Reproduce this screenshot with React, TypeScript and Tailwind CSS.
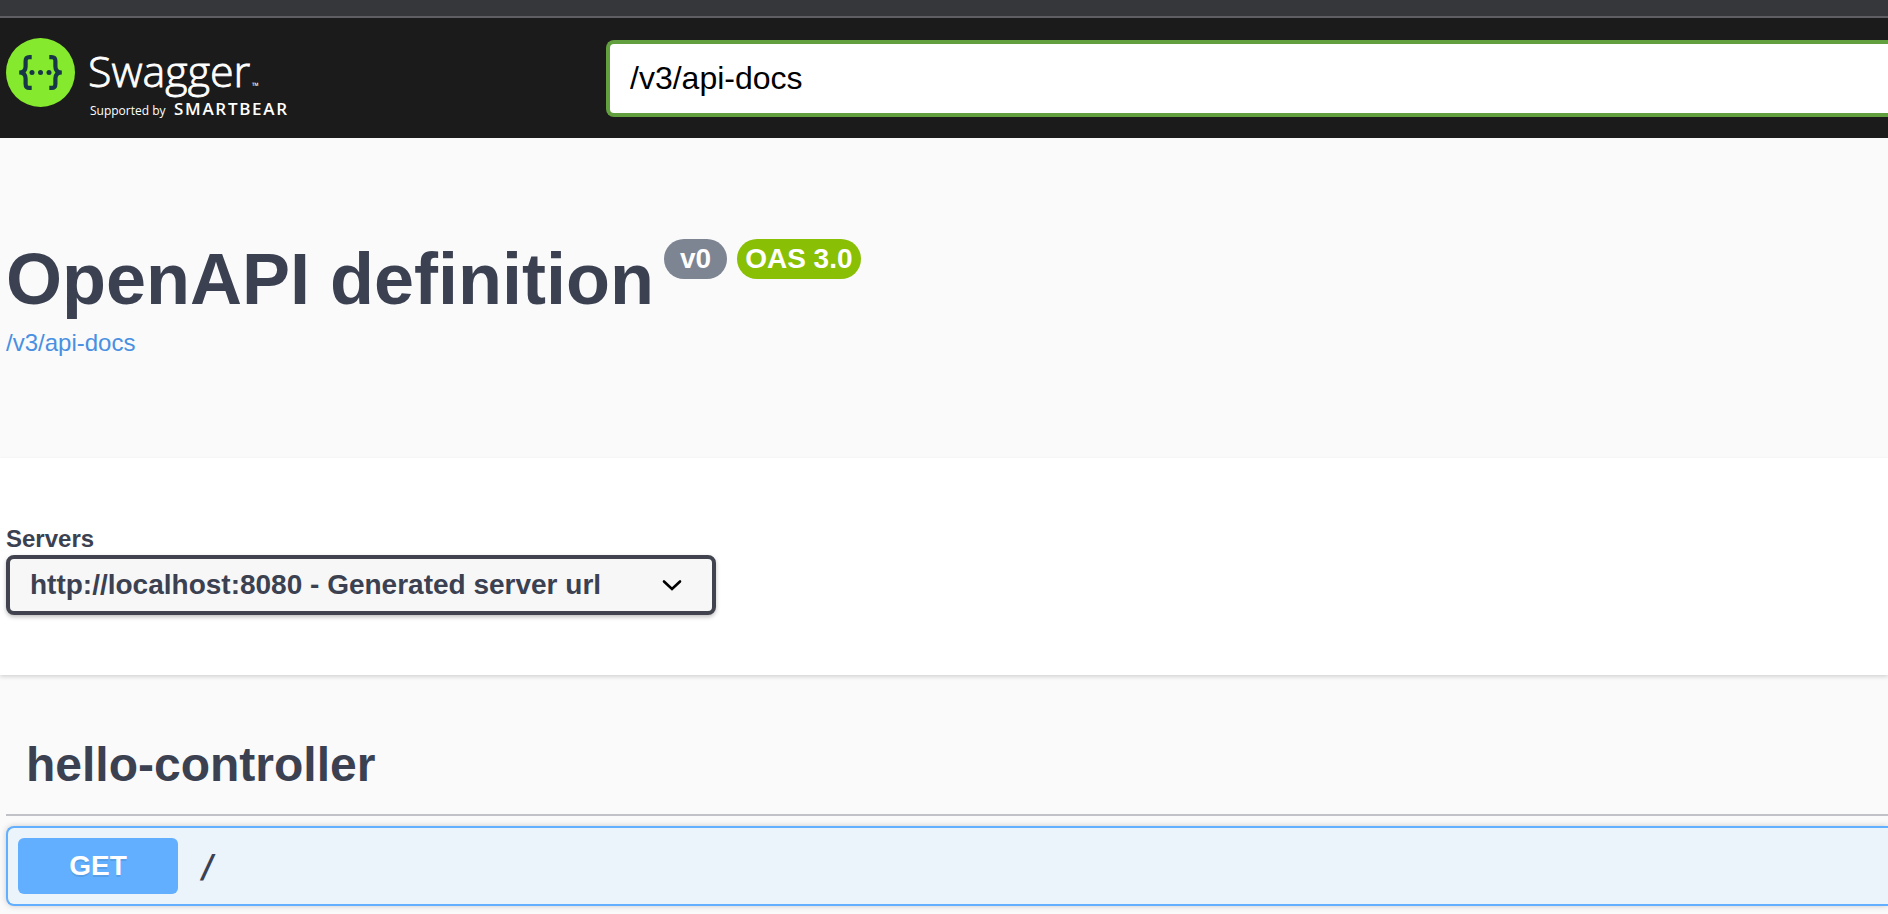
import React, { useState } from 'react';

const servers = [
  { url: 'http://localhost:8080', description: 'Generated server url' },
];

const operations = [{ method: 'GET', path: '/' }];

function Logo() {
  return (
    <svg width="300" height="84" viewBox="0 0 300 84" role="img" aria-label="Swagger">
      <circle cx="34.5" cy="34.5" r="34.5" fill="#85ea2d" />
      <g fill="none" stroke="#173647" strokeWidth="4.2">
        <path d="M25.7 19.1h-2.2c-3 0-3.9 1.3-3.9 4.2v5.2c0 3.6-1.6 6-6.4 6 4.8 0 6.4 2.4 6.4 6v5.2c0 2.9.9 4.2 3.9 4.2h2.2" />
        <path d="M43.3 19.1h2.2c3 0 3.9 1.3 3.9 4.2v5.2c0 3.6 1.6 6 6.4 6-4.8 0-6.4 2.4-6.4 6v5.2c0 2.9-.9 4.2-3.9 4.2h-2.2" />
      </g>
      <g fill="#173647">
        <circle cx="26" cy="34.5" r="2.5" />
        <circle cx="34.5" cy="34.5" r="2.5" />
        <circle cx="43" cy="34.5" r="2.5" />
      </g>
      <text x="82" y="49" fill="#fff" stroke="#fff" strokeWidth="0.8" fontSize="43" className="font-['Open_Sans',sans-serif] font-light">Swagger</text>
      <text x="246" y="51" fill="#fff" fontSize="9" className="font-['Open_Sans',sans-serif]">™</text>
      <text x="84" y="77" fill="#fff" fontSize="12" className="font-['Open_Sans',sans-serif]">Supported by</text>
      <text x="168" y="77" fill="#fff" fontSize="17" className="font-['Open_Sans',sans-serif] font-semibold tracking-widest">SMARTBEAR</text>
    </svg>
  );
}

export default function App() {
  const [specUrl, setSpecUrl] = useState('/v3/api-docs');

  return (
    <div className="min-h-screen overflow-x-hidden bg-[#fafafa] font-['Liberation_Sans',Arial,sans-serif] text-[#3b4151]">
      {/* Browser toolbar edge */}
      <div className="h-[18px] border-b-2 border-[#5f5e63] bg-[#36373b]" />

      {/* Top bar */}
      <header className="flex h-[120px] items-start bg-[#1b1b1b]">
        <a href="#" className="w-[606px] shrink-0 pt-5 pl-1.5">
          <Logo />
        </a>
        <form className="flex min-w-0 flex-1 pt-[22px]" onSubmit={(e) => e.preventDefault()}>
          <input
            type="text"
            aria-label="Definition URL"
            value={specUrl}
            onChange={(e) => setSpecUrl(e.target.value)}
            className="h-[77px] w-full min-w-0 rounded-l-lg border-4 border-r-0 border-[#62a03f] bg-white px-5 text-[32px] text-black outline-none"
          />
        </form>
      </header>

      <main>
        {/* Info */}
        <section className="px-1.5 pt-[101px] pb-[103px]">
          <div className="flex items-start">
            <h2 className="text-[72px] leading-[80px] font-bold">OpenAPI definition</h2>
            <span className="ml-2.5 flex h-10 items-center rounded-full bg-[#7d8492] px-4 text-[28px] font-bold text-white">v0</span>
            <span className="ml-2.5 flex h-10 items-center rounded-full bg-[#89bf04] px-2 text-[28px] font-bold text-white">OAS 3.0</span>
          </div>
          <a href="#" className="mt-3 block w-fit text-2xl leading-6 text-[#4990e2]">/v3/api-docs</a>
        </section>

        {/* Servers */}
        <section className="bg-white px-1.5 pt-[69px] pb-[60px] shadow-[0_2px_4px_rgba(0,0,0,0.15)]">
          <label htmlFor="servers" className="mb-1 block text-2xl leading-6 font-bold">Servers</label>
          <div className="relative w-[710px] max-w-full">
            <select
              id="servers"
              className="block h-[60px] w-full appearance-none rounded-lg border-4 border-[#41444e] bg-[#f7f7f7] pr-20 pl-5 text-[28px] font-bold shadow-[0_2px_4px_rgba(0,0,0,0.25)]"
            >
              {servers.map((server) => (
                <option key={server.url} value={server.url}>
                  {server.url} - {server.description}
                </option>
              ))}
            </select>
            <svg className="pointer-events-none absolute top-6 right-8" width="24" height="14" viewBox="0 0 24 14" fill="none">
              <path d="M4 2.5l8 7.500L20 2.5" stroke="#000" strokeWidth="2.6" strokeLinecap="round" />
            </svg>
          </div>
        </section>

        {/* Operations */}
        <section className="pt-[66px] pl-1.5">
          <h3 className="border-b-2 border-[#c1c2c8] pb-[25px] pl-5 text-[48px] leading-[48px] font-bold">hello-controller</h3>
          {operations.map((op) => (
            <div
              key={op.method + op.path}
              className="mt-2.5 flex items-center rounded-l-lg border-2 border-r-0 border-[#61affe] bg-[#ebf3fb] p-2.5 shadow-[0_0_6px_rgba(0,0,0,0.19)]"
            >
              <button type="button" className="flex flex-1 items-center text-left">
                <span className="flex h-14 w-40 items-center justify-center rounded-md bg-[#61affe] text-[28px] font-bold text-white [text-shadow:0_2px_0_rgba(0,0,0,0.1)]">
                  {op.method}
                </span>
                <span className="px-5 font-['DejaVu_Sans_Mono',monospace] text-[32px] font-bold">{op.path}</span>
              </button>
            </div>
          ))}
        </section>
      </main>
    </div>
  );
}
